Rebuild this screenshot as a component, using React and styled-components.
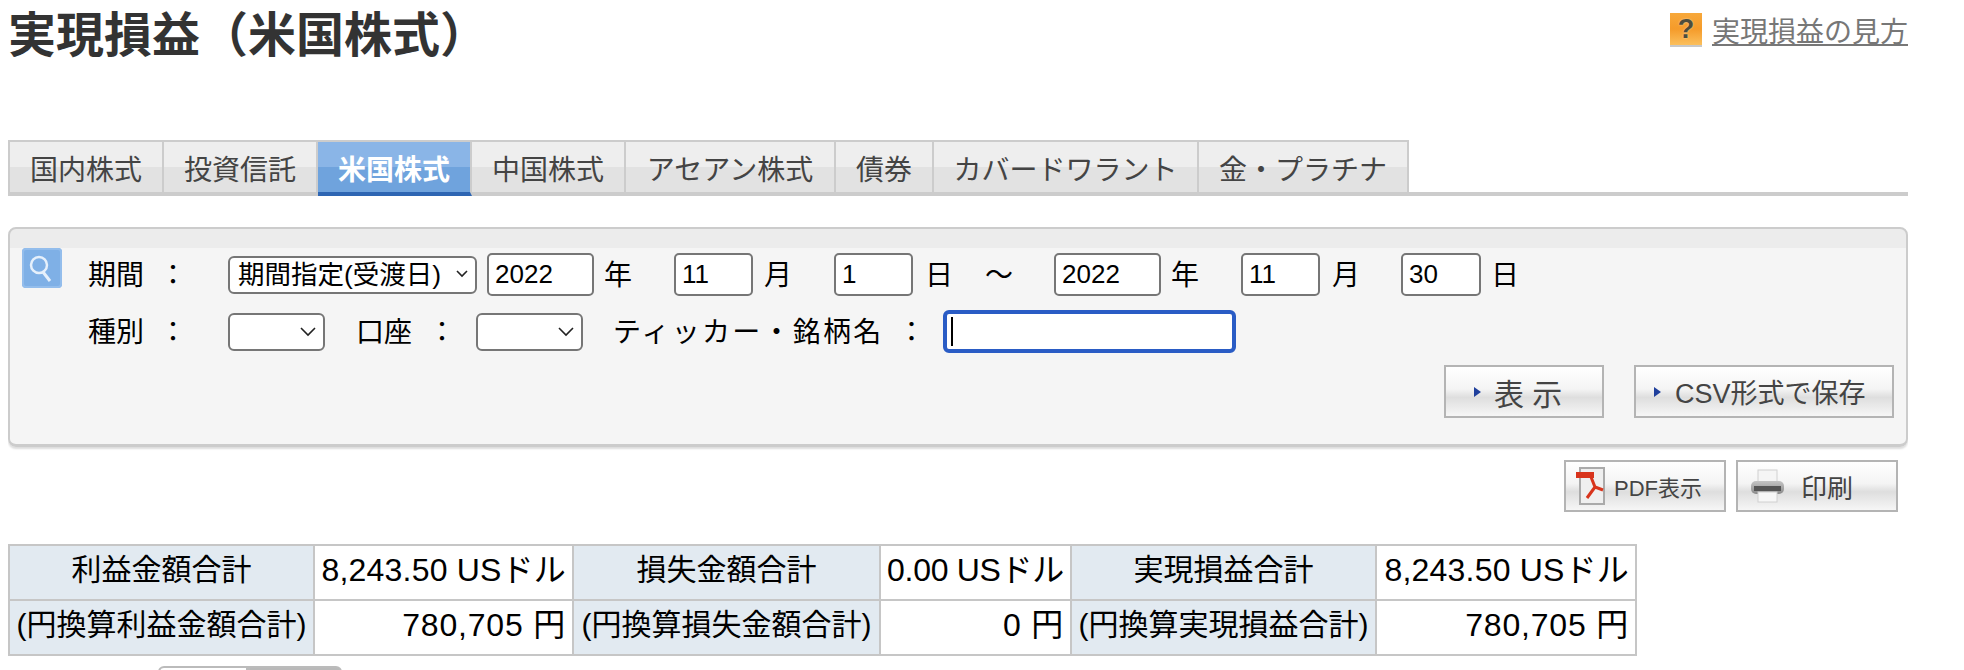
import React from "react";
import styled, { createGlobalStyle } from "styled-components";

const GlobalStyle = createGlobalStyle`
  html, body {
    margin: 0;
    padding: 0;
    background: #fff;
  }
  body {
    font-family: "Liberation Sans", "Noto Sans CJK JP", sans-serif;
    color: #000;
  }
`;

const Page = styled.div`
  width: 1900px;
  height: 670px;
  margin-left: 8px;
  overflow: hidden;
`;

const TitleRow = styled.div`
  display: flex;
  justify-content: space-between;
  align-items: flex-start;
  height: 140px;
`;

const Title = styled.h1`
  margin: 10px 0 0;
  font-size: 48px;
  line-height: 52px;
  font-weight: 700;
  color: #333;
`;

const HelpLink = styled.a`
  display: flex;
  align-items: flex-start;
  gap: 10px;
  margin-top: 13px;
  font-size: 28px;
  color: #777;
`;

const HelpText = styled.span`
  line-height: 40px;
  text-decoration: underline;
`;

const HelpIcon = styled.span`
  display: flex;
  justify-content: center;
  width: 32px;
  height: 34px;
  box-sizing: border-box;
  border-bottom: 2px solid #c8c8c8;
  background: linear-gradient(#f7a83a 0%, #f59b2a 50%, #fbbf5c 100%);
  color: #4d4d3c;
  font-size: 27px;
  line-height: 32px;
  font-weight: 700;
  text-shadow: 0 0 2px rgba(255, 255, 255, 0.6);
`;

const TabBar = styled.ul`
  display: flex;
  height: 56px;
  margin: 0;
  padding: 0;
  list-style: none;
  border-bottom: 4px solid #ccc;
  box-sizing: border-box;
`;

const Tab = styled.li`
  box-sizing: border-box;
  flex: none;
  width: ${props => props.$w}px;
  height: 56px;
  padding-top: 4px;
  border-top: 2px solid #ccc;
  border-right: 2px solid #ccc;
  border-left: ${props => (props.$first ? "2px solid #ccc" : "0")};
  border-bottom: 4px solid ${props => (props.$active ? "#2e66b3" : "#ccc")};
  background: ${props =>
    props.$active
      ? "linear-gradient(#8ab5e7 0 50%, #6fa3dd 50% 100%)"
      : "linear-gradient(#eeeeee 0 50%, #e2e2e2 50% 100%)"};
  color: ${props => (props.$active ? "#fff" : "#444")};
  font-size: 28px;
  font-weight: ${props => (props.$active ? 700 : 400)};
  line-height: 50px;
  text-align: center;
  white-space: nowrap;
`;

const SearchPanel = styled.form`
  display: flex;
  flex-direction: column;
  box-sizing: border-box;
  width: 1900px;
  height: 220px;
  margin: 31px 0 0;
  padding: 0;
  border: 2px solid #ccc;
  border-bottom-width: 3px;
  border-radius: 8px;
  background: linear-gradient(#ececec 0 19px, #f5f5f5 19px 100%);
  box-shadow: 0 2px 2px #ddd;
`;

const PanelBody = styled.div`
  position: relative;
  display: flex;
  flex-direction: column;
  padding: 24px 12px 0 78px;
`;

const SearchIcon = styled.span`
  position: absolute;
  left: 12px;
  top: 19px;
  width: 40px;
  height: 40px;
  border-radius: 4px;
  background: #7fb0e6;
  box-shadow: inset 0 0 0 2px #93bdec;
`;

const FormRow = styled.div`
  display: flex;
  align-items: center;
  height: ${props => props.$h}px;
  margin-top: ${props => props.$mt || 0}px;
  font-size: 28px;
  white-space: nowrap;
`;

const Label = styled.span`
  display: flex;
  justify-content: space-between;
  box-sizing: border-box;
  width: ${props => props.$w}px;
  margin-right: ${props => props.$mr || 0}px;
  padding-bottom: 4px;
`;

const TickerLabel = styled.span`
  padding-bottom: 4px;
  letter-spacing: 2.25px;
`;

const Unit = styled.span`
  margin-left: ${props => props.$ml}px;
  margin-right: ${props => props.$mr}px;
  padding-bottom: 4px;
`;

const SelectWrap = styled.div`
  position: relative;
  width: ${props => props.$w}px;
  height: 38px;
  margin-right: ${props => props.$mr || 0}px;
`;

const Select = styled.select`
  appearance: none;
  width: 100%;
  height: 100%;
  box-sizing: border-box;
  padding: 0 0 0 8px;
  border: 2px solid #767676;
  border-radius: 6px;
  background: #fff;
  color: #000;
  font-family: inherit;
  font-size: 26.5px;
`;

const Chevron = styled.svg`
  position: absolute;
  right: 8px;
  top: 13px;
  pointer-events: none;
`;

const TextInput = styled.input`
  width: ${props => props.$w}px;
  height: 43px;
  box-sizing: border-box;
  padding: 0 6px;
  border: 2px solid #767676;
  border-radius: 5px;
  background: #fff;
  color: #000;
  font-family: inherit;
  font-size: 26px;
  outline: none;
`;

const FocusedField = styled.div`
  position: relative;
  width: 293px;
  height: 43px;
`;

const FocusedInput = styled(TextInput)`
  width: 100%;
  border: 4px solid #2a5cc5;
  border-radius: 6px;
`;

const Caret = styled.span`
  position: absolute;
  left: 8px;
  top: 7px;
  width: 2px;
  height: 29px;
  background: #000;
`;

const ActionRow = styled.div`
  display: flex;
  justify-content: flex-end;
  gap: 30px;
  margin-top: 12px;
`;

const GradientButton = styled.button`
  display: flex;
  align-items: center;
  box-sizing: border-box;
  width: ${props => props.$w}px;
  height: ${props => props.$h}px;
  padding: 0 0 0 ${props => props.$pl}px;
  border: 2px solid #b4b4b4;
  background: linear-gradient(#ffffff 0%, #f4f4f4 45%, #dedede 62%, #f6f6f6 100%);
  color: #444;
  font-family: inherit;
  font-size: ${props => props.$size}px;
  white-space: nowrap;
`;

const Arrow = styled.span`
  width: 0;
  height: 0;
  margin-right: ${props => props.$mr}px;
  border-left: 7px solid #1f3f9c;
  border-top: 5px solid transparent;
  border-bottom: 5px solid transparent;
`;

const ToolRow = styled.div`
  display: flex;
  justify-content: flex-end;
  gap: 10px;
  margin: 13px 10px 0 0;
`;

const IconSvg = styled.svg`
  flex: none;
  margin-right: ${props => props.$mr}px;
`;

const SummaryTable = styled.table`
  width: 1627px;
  margin-top: 32px;
  border-collapse: collapse;
  table-layout: fixed;
  font-size: 30px;
  line-height: 36px;
`;

const HeadCell = styled.th`
  box-sizing: border-box;
  height: 55px;
  padding: 0 0 6px;
  border: 2px solid #c6c6c6;
  background: #e2eaf1;
  font-weight: 400;
  text-align: center;
  white-space: nowrap;
`;

const ValueCell = styled.td`
  box-sizing: border-box;
  height: 55px;
  padding: 0 6px 6px;
  border: 2px solid #c6c6c6;
  font-size: 32px;
  letter-spacing: ${props => props.$spacing}px;
  text-align: right;
  white-space: nowrap;
`;

const SubTabs = styled.div`
  display: flex;
  margin: 10px 0 0 150px;
`;

const SubTab = styled.span`
  box-sizing: border-box;
  width: ${props => props.$w}px;
  height: 30px;
  border: 2px solid #bbb;
  border-radius: ${props => (props.$on ? "6px 0 0 0" : "0 6px 0 0")};
  background: ${props => (props.$on ? "#fff" : "#b9b9b9")};
`;

const tabs = [
  { label: "国内株式", width: 156 },
  { label: "投資信託", width: 154 },
  { label: "米国株式", width: 154 },
  { label: "中国株式", width: 154 },
  { label: "アセアン株式", width: 210 },
  { label: "債券", width: 98 },
  { label: "カバードワラント", width: 265 },
  { label: "金・プラチナ", width: 210 },
];

const summary = [
  ["利益金額合計", "8,243.50 USドル", "損失金額合計", "0.00 USドル", "実現損益合計", "8,243.50 USドル"],
  ["(円換算利益金額合計)", "780,705 円", "(円換算損失金額合計)", "0 円", "(円換算実現損益合計)", "780,705 円"],
];

// the ドル cell in the narrow column has to stay inside its 191px
const valueSpacing = (rowIndex, cellIndex) => {
  if (rowIndex === 1) return 0.8;
  return cellIndex === 3 ? -0.3 : 0.2;
};

const ChevronIcon = ({ w = 18 }) => (
  <Chevron width={w} height="12" viewBox={`0 0 ${w} 12`}>
    <path d={`M2 2 L${w / 2} ${w / 2} L${w - 2} 2`} fill="none" stroke="#222" strokeWidth="1.6" />
  </Chevron>
);

const PdfIcon = () => (
  <IconSvg $mr={8} width="30" height="38" viewBox="0 0 30 38">
    <rect x="4" y="1" width="24" height="36" fill="#efefef" stroke="#aaa" strokeWidth="2" />
    <rect x="0" y="5" width="18" height="6" fill="#d8341c" />
    <path d="M15 10 L19 20 L27 23 M19 20 L11 31" fill="none" stroke="#d8341c" strokeWidth="3" />
  </IconSvg>
);

const PrintIcon = () => (
  <IconSvg $mr={16} width="34" height="34" viewBox="0 0 34 34">
    <defs>
      <linearGradient id="printerBody" x1="0" y1="0" x2="0" y2="1">
        <stop offset="0" stopColor="#c4c4c4" />
        <stop offset="1" stopColor="#8a8a8a" />
      </linearGradient>
    </defs>
    <rect x="7" y="1" width="19" height="14" fill="#f5f5f5" stroke="#d0d0d0" />
    <rect x="0" y="12" width="33" height="13" rx="5" fill="url(#printerBody)" />
    <rect x="3" y="17" width="27" height="5" fill="#555" />
    <rect x="7" y="23" width="19" height="10" fill="#f7f7f7" stroke="#d0d0d0" />
  </IconSvg>
);

const App = () => {
  return (
    <Page>
      <GlobalStyle />
      <TitleRow>
        <Title>実現損益（米国株式）</Title>
        <HelpLink>
          <HelpIcon>?</HelpIcon>
          <HelpText>実現損益の見方</HelpText>
        </HelpLink>
      </TitleRow>
      <TabBar>
        {tabs.map((t, i) => (
          <Tab key={t.label} $w={t.width} $first={i === 0} $active={t.label === "米国株式"}>{t.label}</Tab>
        ))}
      </TabBar>
      <SearchPanel>
        <PanelBody>
          <SearchIcon>
            <svg width="40" height="40" viewBox="0 0 40 40">
              <circle cx="17" cy="17" r="8" fill="none" stroke="#e6f0fb" strokeWidth="2.5" />
              <path d="M21 24 L28 33" stroke="#e6f0fb" strokeWidth="3" />
            </svg>
          </SearchIcon>
          <FormRow $h={43}>
            <Label $w={99} $mr={41}><span>期間</span><span>：</span></Label>
            <SelectWrap $w={249} $mr={10}>
              <Select defaultValue="a"><option value="a">期間指定(受渡日)</option></Select>
              <ChevronIcon w={14} />
            </SelectWrap>
            <TextInput $w={107} defaultValue="2022" />
            <Unit $ml={10} $mr={42}>年</Unit>
            <TextInput $w={79} defaultValue="11" />
            <Unit $ml={11} $mr={42}>月</Unit>
            <TextInput $w={79} defaultValue="1" />
            <Unit $ml={12} $mr={32}>日</Unit>
            <Unit $ml={0} $mr={41}>～</Unit>
            <TextInput $w={107} defaultValue="2022" />
            <Unit $ml={10} $mr={42}>年</Unit>
            <TextInput $w={79} defaultValue="11" />
            <Unit $ml={12} $mr={41}>月</Unit>
            <TextInput $w={80} defaultValue="30" />
            <Unit $ml={10} $mr={0}>日</Unit>
          </FormRow>
          <FormRow $h={43} $mt={14}>
            <Label $w={99} $mr={41}><span>種別</span><span>：</span></Label>
            <SelectWrap $w={97} $mr={31}>
              <Select />
              <ChevronIcon />
            </SelectWrap>
            <Label $w={100} $mr={20}><span>口座</span><span>：</span></Label>
            <SelectWrap $w={107} $mr={30}>
              <Select />
              <ChevronIcon />
            </SelectWrap>
            <TickerLabel>ティッカー・銘柄名</TickerLabel>
            <Label $w={42} $mr={17}><span /><span>：</span></Label>
            <FocusedField>
              <FocusedInput readOnly />
              <Caret />
            </FocusedField>
          </FormRow>
          <ActionRow>
            <GradientButton $w={160} $h={53} $pl={28} $size={30}>
              <Arrow $mr={13} />表 示
            </GradientButton>
            <GradientButton $w={260} $h={53} $pl={18} $size={27}>
              <Arrow $mr={14} />CSV形式で保存
            </GradientButton>
          </ActionRow>
        </PanelBody>
      </SearchPanel>
      <ToolRow>
        <GradientButton $w={162} $h={52} $pl={10} $size={22}>
          <PdfIcon />PDF表示
        </GradientButton>
        <GradientButton $w={162} $h={52} $pl={13} $size={26}>
          <PrintIcon />印刷
        </GradientButton>
      </ToolRow>
      <SummaryTable>
        <colgroup>
          <col width="305" />
          <col width="259" />
          <col width="307" />
          <col width="191" />
          <col width="305" />
          <col width="260" />
        </colgroup>
        <tbody>
          {summary.map((row, r) => (
            <tr key={row[0]}>
              {row.map((cell, i) =>
                i % 2 === 0
                  ? <HeadCell key={cell}>{cell}</HeadCell>
                  : <ValueCell key={i} $spacing={valueSpacing(r, i)}>{cell}</ValueCell>
              )}
            </tr>
          ))}
        </tbody>
      </SummaryTable>
      <SubTabs>
        <SubTab $on $w={90} />
        <SubTab $w={94} />
      </SubTabs>
    </Page>
  );
};

export default App;
